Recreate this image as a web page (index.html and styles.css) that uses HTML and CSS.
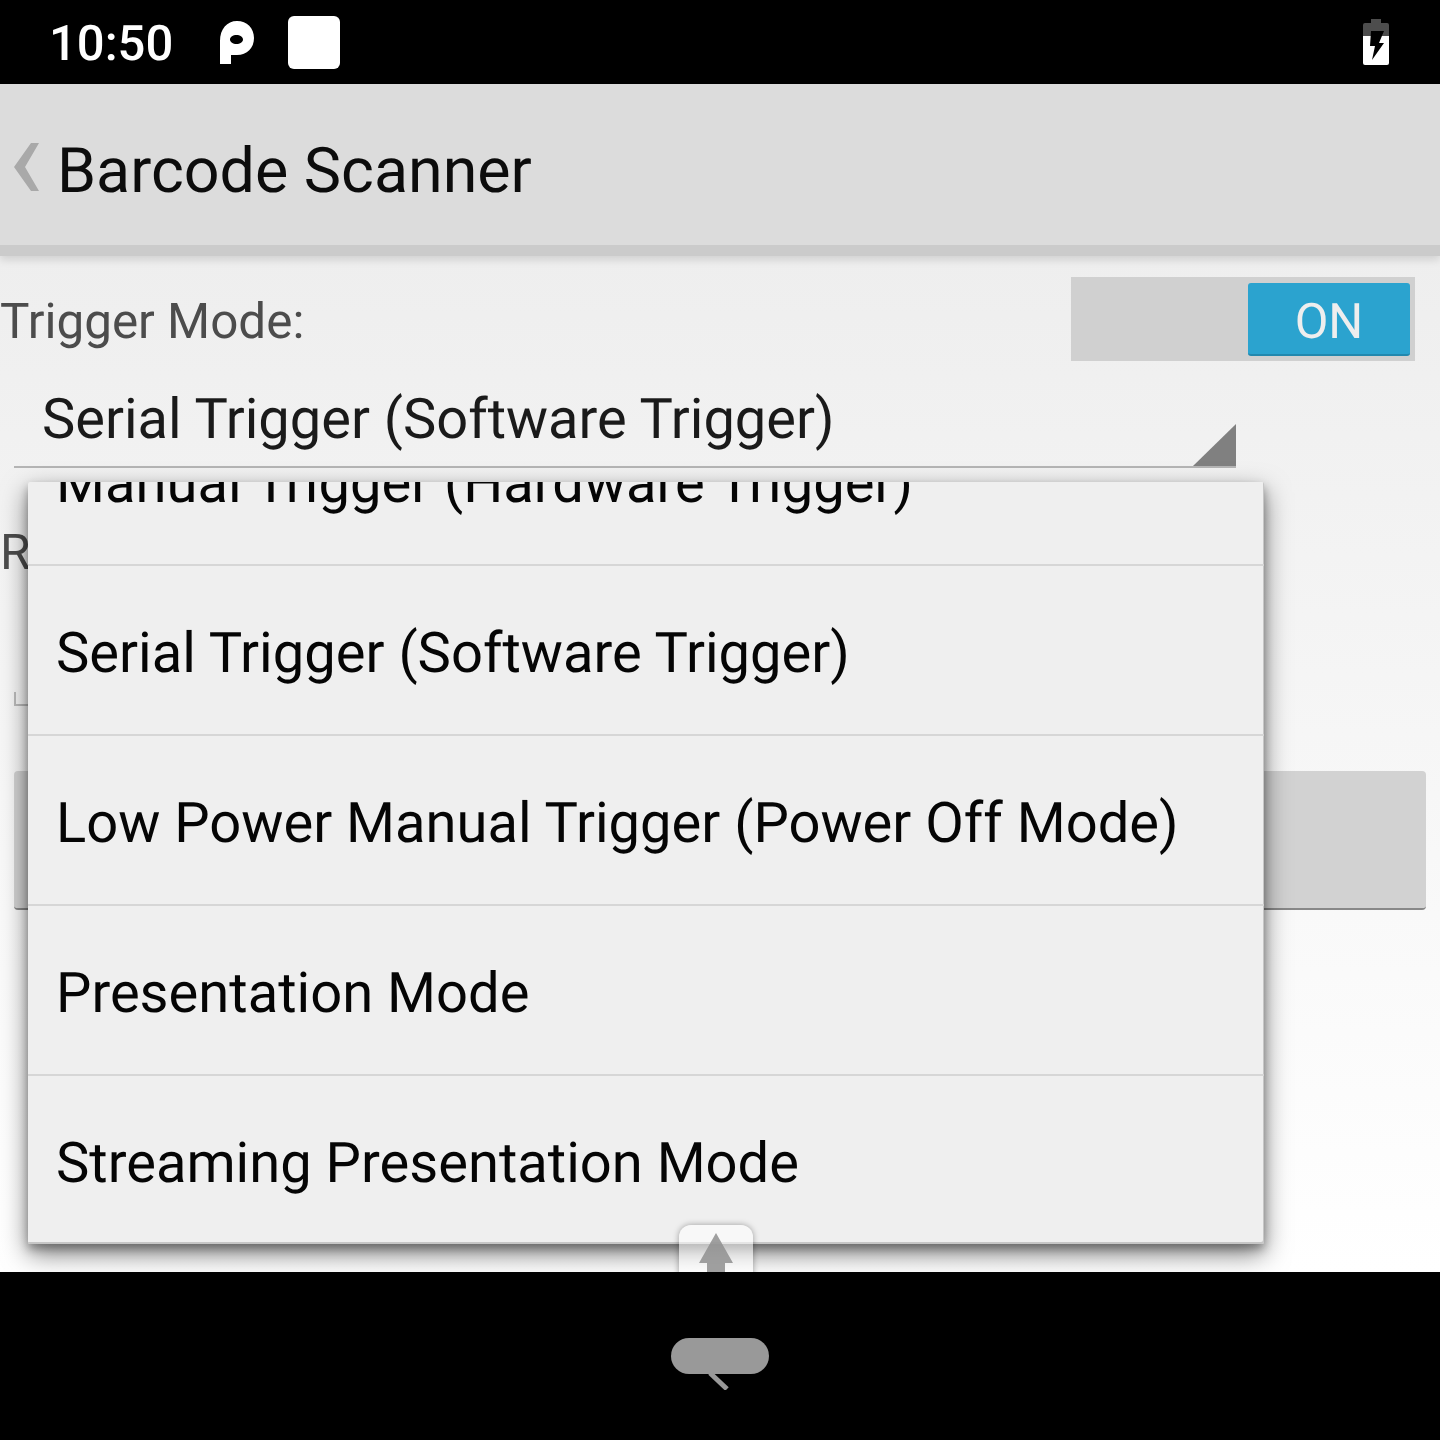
FILE: index.html
```html
<!DOCTYPE html>
<html>
<head>
<title>Barcode Scanner</title>
<meta charset="utf-8" />
<link rel="stylesheet" href="styles.css">
</head>
<body>
  <div class="statusbar">
    <span class="time">10:50</span>
    <svg class="icon-p" width="36" height="44" viewBox="0 0 36 44"><path fill="#fff" fill-rule="evenodd" d="M1 43V20C1 8 8 0 18 0s17 7 17 17-7 17-17 17h-6v9zM11 18.5c0-2.5 3-4.5 6.5-4.5s6.5 2 6.5 4.5-3 4.5-6.5 4.5-6.5-2-6.5-4.5z"/></svg>
    <span class="notif-square"></span>
    <svg class="icon-battery" width="26" height="46" viewBox="0 0 26 46">
      <path fill="#4d4d4d" d="M8 0h10v4h6a2 2 0 0 1 2 2v11H0V6a2 2 0 0 1 2-2h6z"/>
      <path fill="#fff" d="M0 17h26v27a2 2 0 0 1-2 2H2a2 2 0 0 1-2-2z"/>
      <path fill="#000" d="M8 12h13l-5 12h5L9 41l3-14H7z"/>
    </svg>
  </div>

  <div class="appbar">
    <svg class="back" width="28" height="50" viewBox="0 0 28 50"><path fill="#a9a9a9" d="M18 1h8L12 25l14 24h-8L1 25z"/></svg>
    <span class="title">Barcode Scanner</span>
  </div>

  <div class="main">
    <div class="trigger-row">
      <span class="label">Trigger Mode:</span>
      <div class="toggle"><span class="toggle-on">ON</span></div>
    </div>
    <div class="spinner">Serial Trigger (Software Trigger)<span class="spinner-arrow"></span></div>
    <div class="label label-r">R</div>
    <div class="tick"></div>
    <div class="gray-btn"></div>

    <div class="popup">
      <div class="popup-list">
        <div class="popup-item">Manual Trigger (Hardware Trigger)</div>
        <div class="popup-item">Serial Trigger (Software Trigger)</div>
        <div class="popup-item">Low Power Manual Trigger (Power Off Mode)</div>
        <div class="popup-item">Presentation Mode</div>
        <div class="popup-item">Streaming Presentation Mode</div>
      </div>
    </div>

    <div class="scroll-up">
      <svg width="36" height="47" viewBox="0 0 36 47"><path fill="#8f8f8f" fill-opacity="0.85" d="M18 0l17 30H27v17H9V30H1z"/></svg>
    </div>
  </div>

  <div class="navbar">
    <svg width="98" height="52" viewBox="0 0 98 52">
      <rect width="98" height="36" rx="18" fill="#999"/>
      <path d="M39 35l17 16" stroke="#999" stroke-width="5" fill="none"/>
    </svg>
  </div>
</body>
</html>
```

FILE: styles.css
```css
html, body {
  margin: 0;
  padding: 0;
}

body {
  width: 1440px;
  height: 1440px;
  display: flex;
  flex-direction: column;
  overflow: hidden;
  font-family: Roboto, "Liberation Sans", sans-serif;
  text-rendering: geometricPrecision;
  background: #000;
}

.statusbar {
  height: 84px;
  background: #000;
  display: flex;
  align-items: center;
  padding: 0 51px 0 49px;
  flex: none;
}

.time {
  color: #fff;
  font-size: 49px;
  font-weight: 500;
  line-height: 84px;
  margin-top: 4px;
  margin-right: 46px;
}

.icon-p {
  margin-top: 1px;
  margin-right: 33px;
}

.notif-square {
  width: 52px;
  height: 53px;
  margin-top: 1px;
  background: #fff;
  border-radius: 6px;
}

.icon-battery {
  margin-left: auto;
  margin-top: -1px;
}

.appbar {
  height: 172px;
  box-sizing: border-box;
  background: #dcdcdc;
  border-bottom: 11px solid #cbcbcb;
  box-shadow: 0 4px 8px rgba(0, 0, 0, 0.12);
  display: flex;
  align-items: center;
  padding: 12px 0 0 13px;
  flex: none;
  position: relative;
  z-index: 1;
}

.back {
  margin-right: 16px;
  margin-top: -7px;
}

.title {
  font-size: 62.75px;
  margin-top: 2px;
  color: #0c0c0c;
}

.main {
  flex: 1;
  position: relative;
  overflow: hidden;
  background: linear-gradient(#eeeeee, #ffffff);
}

.trigger-row {
  height: 84px;
  margin-top: 21px;
  padding-right: 25px;
  display: flex;
  justify-content: space-between;
  align-items: center;
}

.label {
  font-size: 49.4px;
  color: #4c4c4c;
}

.trigger-row .label {
  padding-top: 6px;
}

.toggle {
  width: 344px;
  height: 84px;
  background: #d0d0d0;
  display: flex;
  justify-content: flex-end;
  align-items: center;
  padding-right: 5px;
  box-sizing: border-box;
}

.toggle-on {
  width: 162px;
  height: 73px;
  padding-top: 6px;
  background: #2ba3cf;
  border-bottom: 2px solid #2288ae;
  border-radius: 3px;
  color: #eee;
  font-size: 49px;
  display: flex;
  justify-content: center;
  align-items: center;
  box-sizing: border-box;
}

.spinner {
  position: relative;
  width: 1222px;
  height: 96px;
  margin: 11px 0 0 14px;
  padding-left: 28px;
  box-sizing: border-box;
  border-bottom: 2px solid #b5b5b5;
  font-size: 56px;
  line-height: 94px;
  color: #1a1a1a;
}

.spinner-arrow {
  position: absolute;
  right: 0;
  bottom: 0;
  width: 0;
  height: 0;
  border-left: 43px solid transparent;
  border-bottom: 42px solid #808080;
}

.label-r {
  height: 60px;
  line-height: 62px;
  margin: 54px 0 0 0;
}

.tick {
  width: 1000px;
  height: 12px;
  margin: 110px 0 0 14px;
  border-left: 2px solid #bbb;
  border-bottom: 2px solid #bbb;
}

.gray-btn {
  width: 1412px;
  height: 139px;
  margin: 65px 0 0 14px;
  box-sizing: border-box;
  background: #d2d2d2;
  border-bottom: 2px solid #888;
  border-radius: 4px;
}

.popup {
  position: absolute;
  top: 226px;
  left: 28px;
  width: 1236px;
  height: 762px;
  overflow: hidden;
  background: #efefef;
  border-radius: 2px;
  box-shadow: 0 10px 26px rgba(0, 0, 0, 0.5), 0 5px 10px rgba(0, 0, 0, 0.3), inset -1px -2px 0 #c6c6c6;
}

.popup-list {
  margin-top: -86px;
}

.popup-item {
  height: 168px;
  padding-left: 28px;
  border-bottom: 2px solid #d6d6d6;
  font-size: 56.1px;
  line-height: 174px;
  color: #050505;
}

.popup-item:last-child {
  border-bottom: 0;
}

.scroll-up {
  position: absolute;
  left: 679px;
  top: 969px;
  width: 74px;
  height: 70px;
  box-sizing: border-box;
  padding-top: 8px;
  display: flex;
  justify-content: center;
  background: rgba(255, 255, 255, 0.55);
  border-radius: 12px 12px 0 0;
  box-shadow: 0 0 6px rgba(0, 0, 0, 0.35);
}

.navbar {
  height: 168px;
  background: #000;
  display: flex;
  justify-content: center;
  padding-top: 66px;
  box-sizing: border-box;
  flex: none;
}
```
